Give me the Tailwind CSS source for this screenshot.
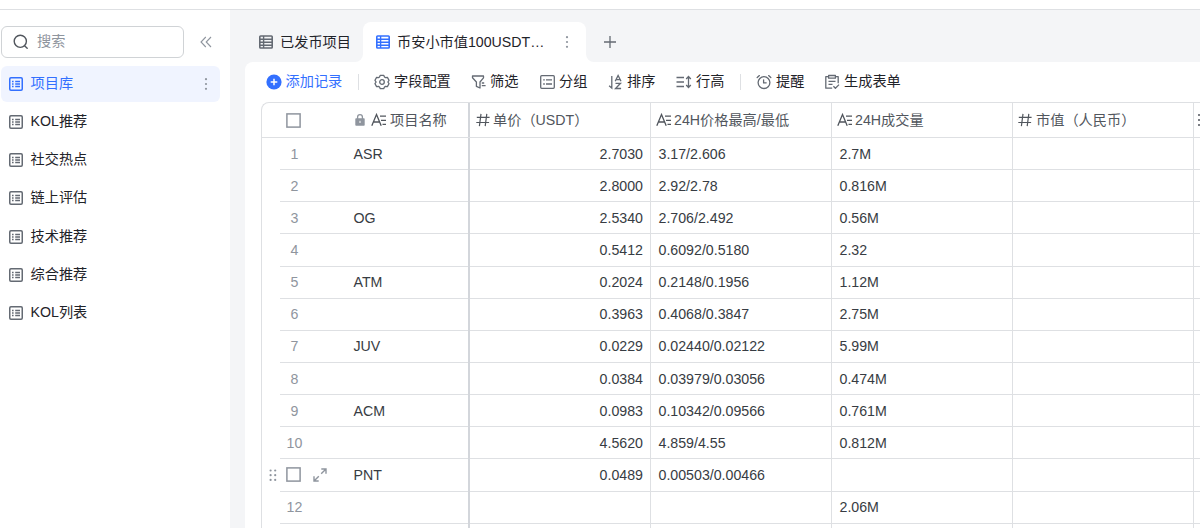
<!DOCTYPE html>
<html lang="zh-CN">
<head>
  <meta charset="UTF-8" />
  <meta name="viewport" content="width=device-width, initial-scale=1" />
  <title>项目库</title>

  <!-- Tailwind CDN -->
  <script src="https://cdn.jsdelivr.net/npm/@tailwindcss/browser@4"></script>
</head>
<body class="h-screen overflow-hidden bg-white font-['Liberation_Sans','Noto_Sans_CJK_SC',sans-serif] text-[14.2px] leading-5 text-[#1f2329] select-none">

<!-- Ícones -->
<svg class="hidden">
  <symbol id="i-table" viewBox="0 0 14 14" fill="none" stroke="currentColor">
    <rect x=".75" y=".75" width="12.5" height="12.5" rx="1.2" stroke-width="1.5" />
    <path d="M3 4.5h1.6M3 7h1.6M3 9.5h1.6M6.2 4.5H11M6.2 7H11M6.2 9.5H11" stroke-width="1.3" />
  </symbol>
  <symbol id="i-grid" viewBox="0 0 14 14" fill="none" stroke="currentColor">
    <rect x=".8" y="1" width="12.4" height="12" rx=".8" stroke-width="1.6" />
    <path d="M1 4.2h12M1 7.2h12M1 10.2h12M4.6 1v12" stroke-width="1.4" />
  </symbol>
  <symbol id="i-search" viewBox="0 0 16 16" fill="none" stroke="currentColor" stroke-width="1.4" stroke-linecap="round">
    <circle cx="7.3" cy="7.3" r="6.1" /><path d="M11.8 11.9l2.4 2.3" />
  </symbol>
  <symbol id="i-collapse" viewBox="0 0 12 12" fill="none" stroke="currentColor" stroke-width="1.1">
    <path d="M5.8 1L1 6l4.8 5M11 1L6.2 6l4.8 5" />
  </symbol>
  <symbol id="i-more" viewBox="0 0 4 14" fill="currentColor">
    <circle cx="2" cy="2.2" r="1.1" /><circle cx="2" cy="7" r="1.1" /><circle cx="2" cy="11.8" r="1.1" />
  </symbol>
  <symbol id="i-plus" viewBox="0 0 12 12" fill="none" stroke="currentColor" stroke-width="1.3">
    <path d="M6 0v12M0 6h12" />
  </symbol>
  <symbol id="i-box" viewBox="0 0 15 15" fill="none" stroke="currentColor" stroke-width="1.5">
    <rect x=".9" y=".9" width="13.2" height="13.2" />
  </symbol>
  <symbol id="i-add" viewBox="0 0 16 16">
    <circle cx="8" cy="8" r="7.6" fill="currentColor" />
    <path d="M8 4.7v6.6M4.7 8h6.6" stroke="#fff" stroke-width="1.5" />
  </symbol>
  <symbol id="i-gear" viewBox="0 0 16 16" fill="none" stroke="currentColor" stroke-width="1.3" stroke-linejoin="round">
    <path d="M6.3 1.3h3.4l.8 1.7 1 .6 1.9-.2L15 6.3 13.9 8 15 9.7l-1.6 2.900-1.900-.2-1 .6-.8 1.700H6.300L5.500 13l-1-.6-1.900.2L1 9.700 2.100 8 1 6.300l1.600-2.900 1.900.2 1-.6z" />
    <circle cx="8" cy="8" r="2.3" />
  </symbol>
  <symbol id="i-filter" viewBox="0 0 16 16" fill="none" stroke="currentColor" stroke-width="1.3" stroke-linejoin="round">
    <path d="M1.500 2h11v1.800L9 8v6l-3.600-1.600V8L1.500 3.800zM10.800 9h2.400M10.800 11.700h3.800" />
  </symbol>
  <symbol id="i-group" viewBox="0 0 15 14" fill="none" stroke="currentColor" stroke-width="1.3">
    <rect x=".7" y=".7" width="13.6" height="12.6" rx="1" />
    <path d="M3.2 4.8h1.6M6 4.8h6M3.2 9h1.6M6 9h6" />
  </symbol>
  <symbol id="i-sort" viewBox="0 0 14 16" fill="none" stroke="currentColor" stroke-width="1.3">
    <path d="M3.3 2v12L.6 11.7M6.7 7.3l2.900-5.800 2.900 5.800M7.600 5.600h4M7 9.300h5l-5 5.200h5.600" />
  </symbol>
  <symbol id="i-height" viewBox="0 0 16 14" fill="none" stroke="currentColor" stroke-width="1.3">
    <path d="M.5 2.5H8M.5 7H8M.5 11.500H8M12.500 1.800v10.400M10.200 4l2.300-2.500L14.800 4M10.200 10l2.300 2.500 2.300-2.500" />
  </symbol>
  <symbol id="i-clock" viewBox="0 0 16 16" fill="none" stroke="currentColor" stroke-width="1.3" stroke-linecap="round">
    <circle cx="8" cy="8.6" r="5.9" /><path d="M7.600 5.800v3h2.600M1.200 3.600l2.200-2M14.800 3.600l-2.200-2" />
  </symbol>
  <symbol id="i-form" viewBox="0 0 16 16" fill="none" stroke="currentColor" stroke-width="1.3" stroke-linejoin="round">
    <path d="M4.600 2.700H1.800v11.500h6.400M11.400 2.700h2.800v6.500M4.600 1.500h6.800v2.700H4.600zM4.500 7.300h7M4.500 10.300h4M9.400 12.300l2 2 3.600-3.700" />
  </symbol>
  <symbol id="i-lock" viewBox="0 0 12 14">
    <rect x="1.3" y="5.2" width="9.4" height="7.6" rx=".8" fill="currentColor" />
    <path d="M3.600 6V4a2.400 2.400 0 0 1 4.800 0v2" fill="none" stroke="currentColor" stroke-width="1.3" />
    <path d="M6 7.800v2.200" stroke="#fff" stroke-width="1" />
  </symbol>
  <symbol id="i-text" viewBox="0 0 16 14" fill="none" stroke="currentColor" stroke-width="1.3">
    <path d="M.8 12.800L5.500 1.500l4.700 11.300M2.600 9h5.800M9 3.200h6M10 7.300h5M11.500 11.400H15" />
  </symbol>
  <symbol id="i-hash" viewBox="0 0 14 14" fill="none" stroke="currentColor" stroke-width="1.2">
    <path d="M5 .8L3.400 13.200M10.800.8L9.200 13.200M.8 4.300h12.800M.3 9.500h12.800" />
  </symbol>
  <symbol id="i-expand" viewBox="0 0 14 14" fill="none" stroke="currentColor" stroke-width="1.4">
    <path d="M8.300 1H13v4.700M13 1L8.200 5.800M5.700 13H1V8.300M1 13l4.800-4.800" />
  </symbol>
  <symbol id="i-drag" viewBox="0 0 8 12" fill="currentColor">
    <circle cx="1.6" cy="1.5" r="1.1" /><circle cx="6.2" cy="1.5" r="1.1" />
    <circle cx="1.6" cy="6.2" r="1.1" /><circle cx="6.2" cy="6.2" r="1.1" />
    <circle cx="1.6" cy="10.9" r="1.1" /><circle cx="6.2" cy="10.9" r="1.1" />
  </symbol>
</svg>

<div class="flex h-screen flex-col">
  <div class="h-2.5 shrink-0 border-b border-[#dee0e3]"></div>

  <div class="flex min-h-0 flex-1">
    <!-- Menu lateral -->
    <aside class="w-[230px] shrink-0 pl-px pr-2.5 pt-4">
      <div class="flex items-center">
        <div class="flex h-8 w-[183px] items-center rounded-md border border-[#d0d3d6] pb-0.5 pl-[11px] text-[#8f959e]">
          <svg class="mr-2 size-4 translate-y-px text-[#51565d]"><use href="#i-search" /></svg>搜索
        </div>
        <svg class="ml-4 size-3 text-[#8f959e]"><use href="#i-collapse" /></svg>
      </div>
      <nav id="menu" class="mt-2 flex flex-col gap-[2.200px]"></nav>
    </aside>

    <main class="flex min-w-0 flex-1 flex-col bg-[#f4f5f7]">
      <!-- Abas -->
      <div class="flex h-[52px] shrink-0 items-end pl-4">
        <div class="flex h-10 w-[117px] items-center pl-[13px]">
          <svg class="mr-[7px] size-3.5 text-[#646a73]"><use href="#i-grid" /></svg>已发币项目
        </div>
        <div class="relative flex h-10 w-[223px] items-center rounded-t-lg bg-white pl-[13px]">
          <div class="absolute -left-2 bottom-0 size-2 bg-white"><div class="size-2 rounded-br-lg bg-[#f4f5f7]"></div></div>
          <div class="absolute -right-2 bottom-0 size-2 bg-white"><div class="size-2 rounded-bl-lg bg-[#f4f5f7]"></div></div>
          <svg class="mr-[7px] size-3.5 text-[#3370ff]"><use href="#i-grid" /></svg>
          <span class="w-[168px]">币安小市值100USDT…</span>
          <svg class="h-3.5 w-1 text-[#8f959e]"><use href="#i-more" /></svg>
        </div>
        <div class="flex h-10 items-center pl-[18px]">
          <svg class="size-3 text-[#646a73]"><use href="#i-plus" /></svg>
        </div>
      </div>

      <div class="ml-[15px] flex min-h-0 flex-1 flex-col overflow-hidden rounded-tl-lg bg-white">
        <!-- Barra de ferramentas -->
        <div class="flex h-10 shrink-0 items-center pb-0.5 pl-[21px]">
          <div class="flex w-[92px] items-center text-[#3370ff]"><svg class="mr-[3.500px] size-4 translate-y-px"><use href="#i-add" /></svg>添加记录</div>
          <div class="mr-[15px] h-4 w-px translate-y-px bg-[#dee0e3]"></div>
          <div class="flex w-[97px] items-center"><svg class="mr-1 size-4 translate-y-px text-[#646a73]"><use href="#i-gear" /></svg>字段配置</div>
          <div class="flex w-[69px] items-center"><svg class="mr-[3px] size-4 translate-y-px text-[#646a73]"><use href="#i-filter" /></svg>筛选</div>
          <div class="flex w-[68px] items-center"><svg class="mr-1 h-3.5 w-[15px] translate-y-px text-[#646a73]"><use href="#i-group" /></svg>分组</div>
          <div class="flex w-[68px] items-center"><svg class="mr-1 h-4 w-[15px] translate-y-px text-[#646a73]"><use href="#i-sort" /></svg>排序</div>
          <div class="flex w-16 items-center"><svg class="mr-1 h-3.5 w-4 translate-y-px text-[#646a73]"><use href="#i-height" /></svg>行高</div>
          <div class="mr-[15px] h-4 w-px translate-y-px bg-[#dee0e3]"></div>
          <div class="flex w-[68px] items-center"><svg class="mr-1 size-4 translate-y-px text-[#646a73]"><use href="#i-clock" /></svg>提醒</div>
          <div class="flex items-center"><svg class="mr-1 size-4 translate-y-px text-[#646a73]"><use href="#i-form" /></svg>生成表单</div>
        </div>

        <!-- Tabela -->
        <div class="ml-4 min-h-0 flex-1 overflow-hidden rounded-tl-lg border-l border-t border-[#dee0e3] text-[#373c43]">
          <div class="grid h-[35px] grid-cols-[208px_181px_181px_181px_181px_1fr] border-b border-[#dee0e3] text-[#51565d]">
            <div class="flex items-center border-r-2 border-[#d3d6db] pl-6">
              <svg class="size-[15px] text-[#8f959e]"><use href="#i-box" /></svg>
              <svg class="ml-[53px] mr-[5px] h-3.5 w-3 text-[#8f959e]"><use href="#i-lock" /></svg>
              <svg class="mr-[3px] h-3.5 w-4"><use href="#i-text" /></svg>项目名称
            </div>
            <div class="flex items-center border-r border-[#dee0e3] pl-1.5"><svg class="mr-[3px] size-3.5"><use href="#i-hash" /></svg>单价（USDT）</div>
            <div class="flex items-center border-r border-[#dee0e3] pl-[5px]"><svg class="mr-0.5 h-3.5 w-4"><use href="#i-text" /></svg>24H价格最高/最低</div>
            <div class="flex items-center border-r border-[#dee0e3] pl-[5px]"><svg class="mr-0.5 h-3.5 w-4"><use href="#i-text" /></svg>24H成交量</div>
            <div class="flex items-center border-r border-[#dee0e3] pl-[5px]"><svg class="mr-1 size-3.5"><use href="#i-hash" /></svg>市值（人民币）</div>
            <div class="flex items-center pl-1"><svg class="h-3.5 w-4 shrink-0" viewBox="0 0 16 14" fill="none" stroke="currentColor" stroke-width="1.3"><path d="M0 2h2M4 2h10M0 7h2M4 7h10M0 12h2M4 12h10" /></svg></div>
          </div>
          <div id="linhas"></div>
        </div>
      </div>
    </main>
  </div>
</div>

<script>
const $ = s => document.querySelector(s);

/*--------------------------------------------------------------
  Menu
--------------------------------------------------------------*/
const itens = ['项目库', 'KOL推荐', '社交热点', '链上评估', '技术推荐', '综合推荐', 'KOL列表'];

$('#menu').innerHTML = itens.map((nome, i) => `
  <div class="flex h-9 items-center rounded-md pb-[2.500px] pl-2 ${i === 0 ? 'bg-[#f0f4ff] text-[#3370ff]' : ''}">
    <svg class="mr-[7.500px] size-3.5 translate-y-px ${i === 0 ? '' : 'text-[#646a73]'}"><use href="#i-table" /></svg>
    <span class="flex-1">${nome}</span>
    ${i === 0 ? '<svg class="mr-3 h-3.5 w-1 translate-y-px text-[#8f959e]"><use href="#i-more" /></svg>' : ''}
  </div>`).join('');

/*--------------------------------------------------------------
  Linhas da tabela: nome, preço, máx/mín, volume
--------------------------------------------------------------*/
const dados = [
  ['ASR', '2.7030', '3.17/2.606',      '2.7M'],
  ['',    '2.8000', '2.92/2.78',       '0.816M'],
  ['OG',  '2.5340', '2.706/2.492',     '0.56M'],
  ['',    '0.5412', '0.6092/0.5180',   '2.32'],
  ['ATM', '0.2024', '0.2148/0.1956',   '1.12M'],
  ['',    '0.3963', '0.4068/0.3847',   '2.75M'],
  ['JUV', '0.0229', '0.02440/0.02122', '5.99M'],
  ['',    '0.0384', '0.03979/0.03056', '0.474M'],
  ['ACM', '0.0983', '0.10342/0.09566', '0.761M'],
  ['',    '4.5620', '4.859/4.55',      '0.812M'],
  ['PNT', '0.0489', '0.00503/0.00466', ''],
  ['',    '',       '',                '2.06M'],
  ['',    '',       '',                ''],
];
const linhaAtiva = 10;

function indiceHtml(i){
  if (i !== linhaAtiva)
    return `<span class="ml-[18px] flex h-full w-[29px] items-center justify-center border-b border-[#dee0e3] text-[#8f959e]">${i < 12 ? i + 1 : ''}</span>
            <span class="h-full w-[45px] border-b border-[#dee0e3]"></span>`;
  return `
    <svg class="ml-[7px] mr-[3px] h-3 w-2 text-[#8f959e]"><use href="#i-drag" /></svg>
    <span class="flex h-full w-[74px] items-center border-b border-[#dee0e3] pl-1.5">
      <svg class="size-[15px] text-[#8f959e]"><use href="#i-box" /></svg>
      <svg class="ml-3 size-3.5 text-[#8f959e]"><use href="#i-expand" /></svg>
    </span>`;
}

$('#linhas').innerHTML = dados.map(([nome, preco, faixa, volume], i) => `
  <div class="grid h-[32.150px] grid-cols-[208px_181px_181px_181px_181px_1fr]">
    <div class="flex items-center border-r-2 border-r-[#d3d6db]">
      ${indiceHtml(i)}
      <span class="-ml-[0.500px] flex h-full flex-1 items-center border-b border-[#dee0e3]">${nome}</span>
    </div>
    <div class="flex items-center justify-end border-r border-b border-[#dee0e3] pr-[7px]">${preco}</div>
    <div class="flex items-center border-r border-b border-[#dee0e3] pl-[7.500px]">${faixa}</div>
    <div class="flex items-center border-r border-b border-[#dee0e3] pl-[7.500px]">${volume}</div>
    <div class="border-r border-b border-[#dee0e3]"></div>
    <div class="border-b border-[#dee0e3]"></div>
  </div>`).join('');
</script>
</body>
</html>
